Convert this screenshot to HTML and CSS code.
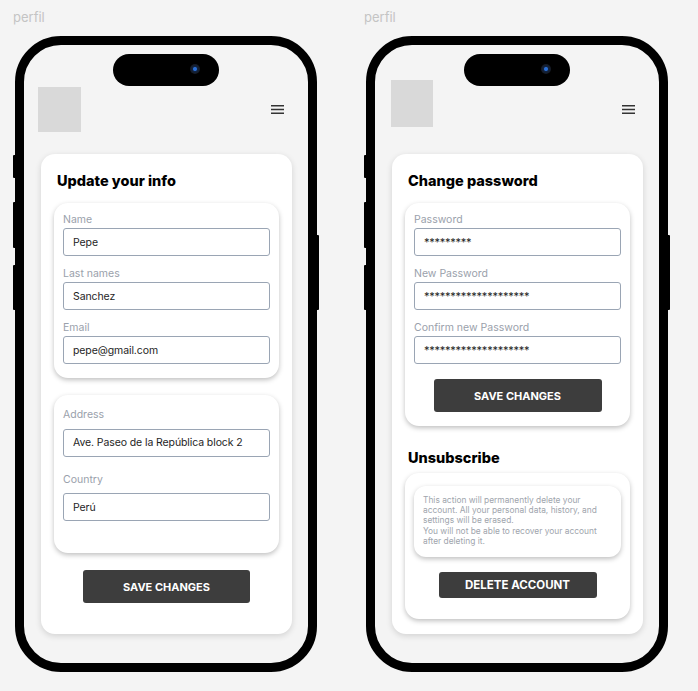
FILE: index.html
```html
<!DOCTYPE html>
<html lang="en">
<head>
    <meta charset="UTF-8">
    <meta name="viewport" content="width=device-width, initial-scale=1.0">
    <title>perfil</title>
    <link rel="stylesheet" href="styles.css">
</head>
<body>
    <div class="frame">
        <div class="frame-label">perfil</div>
        <div class="phone">
            <span class="side-btn side-btn--mute"></span>
            <span class="side-btn side-btn--up"></span>
            <span class="side-btn side-btn--down"></span>
            <span class="side-btn side-btn--power"></span>
            <div class="notch"><span class="camera"></span></div>

            <div class="header">
                <div class="logo"></div>
                <svg class="menu" width="13" height="9" viewBox="0 0 13 9">
                    <path d="M0 0.75H13M0 4.5H13M0 8.25H13" stroke="#333" stroke-width="1.3"/>
                </svg>
            </div>

            <div class="card">
                <h2 class="card-title">Update your info</h2>
                <div class="group">
                    <label class="field-label">Name</label>
                    <input class="field" type="text" value="Pepe" readonly>
                    <label class="field-label">Last names</label>
                    <input class="field" type="text" value="Sanchez" readonly>
                    <label class="field-label">Email</label>
                    <input class="field" type="text" value="pepe@gmail.com" readonly>
                </div>
                <div class="group group--loose">
                    <label class="field-label">Address</label>
                    <input class="field" type="text" value="Ave. Paseo de la República block 2" readonly>
                    <label class="field-label">Country</label>
                    <input class="field" type="text" value="Perú" readonly>
                </div>
                <button class="btn">SAVE CHANGES</button>
            </div>
        </div>
    </div>

    <div class="frame">
        <div class="frame-label">perfil</div>
        <div class="phone">
            <span class="side-btn side-btn--mute"></span>
            <span class="side-btn side-btn--up"></span>
            <span class="side-btn side-btn--down"></span>
            <span class="side-btn side-btn--power"></span>
            <div class="notch"><span class="camera"></span></div>

            <div class="header">
                <div class="logo logo--alt"></div>
                <svg class="menu" width="13" height="9" viewBox="0 0 13 9">
                    <path d="M0 0.75H13M0 4.5H13M0 8.25H13" stroke="#333" stroke-width="1.3"/>
                </svg>
            </div>

            <div class="card">
                <h2 class="card-title">Change password</h2>
                <div class="group">
                    <label class="field-label">Password</label>
                    <input class="field field--secret" type="text" value="*********" readonly>
                    <label class="field-label">New Password</label>
                    <input class="field field--secret" type="text" value="********************" readonly>
                    <label class="field-label">Confirm new Password</label>
                    <input class="field field--secret" type="text" value="********************" readonly>
                    <button class="btn btn--in-group">SAVE CHANGES</button>
                </div>

                <h2 class="card-title card-title--section">Unsubscribe</h2>
                <div class="group group--danger">
                    <p class="notice">
                        This action will permanently delete your<br>
                        account. All your personal data, history, and<br>
                        settings will be erased.<br>
                        You will not be able to recover your account<br>
                        after deleting it.
                    </p>
                    <button class="btn btn--delete">DELETE ACCOUNT</button>
                </div>
            </div>
        </div>
    </div>
</body>
</html>
```

FILE: styles.css
```css
body {
    margin: 0;
    padding: 9px 0 0 13px;
    background-color: #f4f4f4;
    font-family: Inter, "Noto Sans", sans-serif;
    display: flex;
    gap: 47px;
}
.frame-label {
    font-size: 13px;
    line-height: 16px;
    color: #c4c4c4;
}
.phone {
    position: relative;
    width: 302px;
    height: 636px;
    margin: 11px 0 0 2px;
    box-sizing: border-box;
    border: 9px solid #000;
    border-radius: 46px;
    background-color: #f4f4f4;
}
.side-btn {
    position: absolute;
    width: 3px;
    left: -11px;
    background: #000;
    border-radius: 1px;
}
.side-btn--mute { top: 110px; height: 23px; }
.side-btn--up { top: 157px; height: 46px; }
.side-btn--down { top: 220px; height: 45px; }
.side-btn--power { left: auto; right: -11px; top: 190px; height: 75px; }
.notch {
    position: absolute;
    top: 9px;
    left: 89px;
    width: 106px;
    height: 32px;
    border-radius: 16px;
    background: #000;
}
.camera {
    position: absolute;
    left: 77px;
    top: 10px;
    width: 10px;
    height: 10px;
    border-radius: 50%;
    background: radial-gradient(circle, #2a6fd6 0 1.5px, #12233f 2.5px, #161a22 5px);
}
.header {
    height: 109px;
    padding: 0 24px 0 14px;
    box-sizing: border-box;
    display: flex;
    justify-content: space-between;
    align-items: flex-start;
}
.logo {
    width: 43px;
    height: 45px;
    margin-top: 42px;
    background-color: #d9d9d9;
}
.logo--alt {
    width: 42px;
    height: 47px;
    margin: 35px 0 0 2px;
}
.menu {
    margin-top: 60px;
}
.card {
    height: 480px;
    margin: 0 16px 0 17px;
    padding: 17px 13px 0;
    box-sizing: border-box;
    background: #fff;
    border-radius: 14px;
    box-shadow: 0 2px 6px rgba(0,0,0,0.14);
}
.card-title {
    margin: 0 0 12px;
    padding: 0 3px;
    font-size: 14.5px;
    line-height: 20px;
    font-weight: 800;
    color: #000;
}
.card-title--section {
    margin: 22px 0 5px;
}
.group {
    display: flex;
    flex-direction: column;
    padding: 10px 9px 14px;
    margin-bottom: 17px;
    background: #fff;
    border-radius: 14px;
    box-shadow: 0 2px 5px rgba(0,0,0,0.25);
}
.field-label {
    font-size: 10.5px;
    line-height: 13px;
    color: #9aa1ab;
    margin-bottom: 2px;
}
.field {
    height: 28px;
    margin: 0 0 11px;
    padding: 0 9px;
    box-sizing: border-box;
    border: 1px solid #9aa5b4;
    border-radius: 3px;
    font-family: Inter, sans-serif;
    font-size: 10.5px;
    letter-spacing: -0.1px;
    color: #1e1e1e;
    outline: none;
}
.field:last-child {
    margin-bottom: 0;
}
.field--secret {
    font-size: 11px;
    letter-spacing: -0.25px;
}
.group--loose {
    padding: 13px 9px 32px;
}
.group--loose .field-label {
    margin-bottom: 7.5px;
}
.group--loose .field {
    margin-bottom: 16px;
}
.group--loose .field:last-child {
    margin-bottom: 0;
}
.btn {
    display: block;
    width: 167px;
    height: 33px;
    margin: 0 auto;
    border: none;
    border-radius: 3px;
    background-color: #3d3d3d;
    color: #fff;
    font-family: Inter, sans-serif;
    font-size: 11px;
    font-weight: 700;
}
.btn--in-group {
    margin-top: 4px;
    width: 168px;
}
.group--danger {
    padding: 13px 9px 21px;
    margin-bottom: 0;
}
.notice {
    margin: 0 0 15px;
    padding: 8.5px 9px 10.5px;
    background: #fff;
    border-radius: 12px;
    box-shadow: 0 2px 5px rgba(0,0,0,0.25);
    font-size: 8.4px;
    line-height: 10.4px;
    color: #a0a5ad;
}
.btn--delete {
    width: 158px;
    height: 26px;
    font-size: 11.5px;
}
```
